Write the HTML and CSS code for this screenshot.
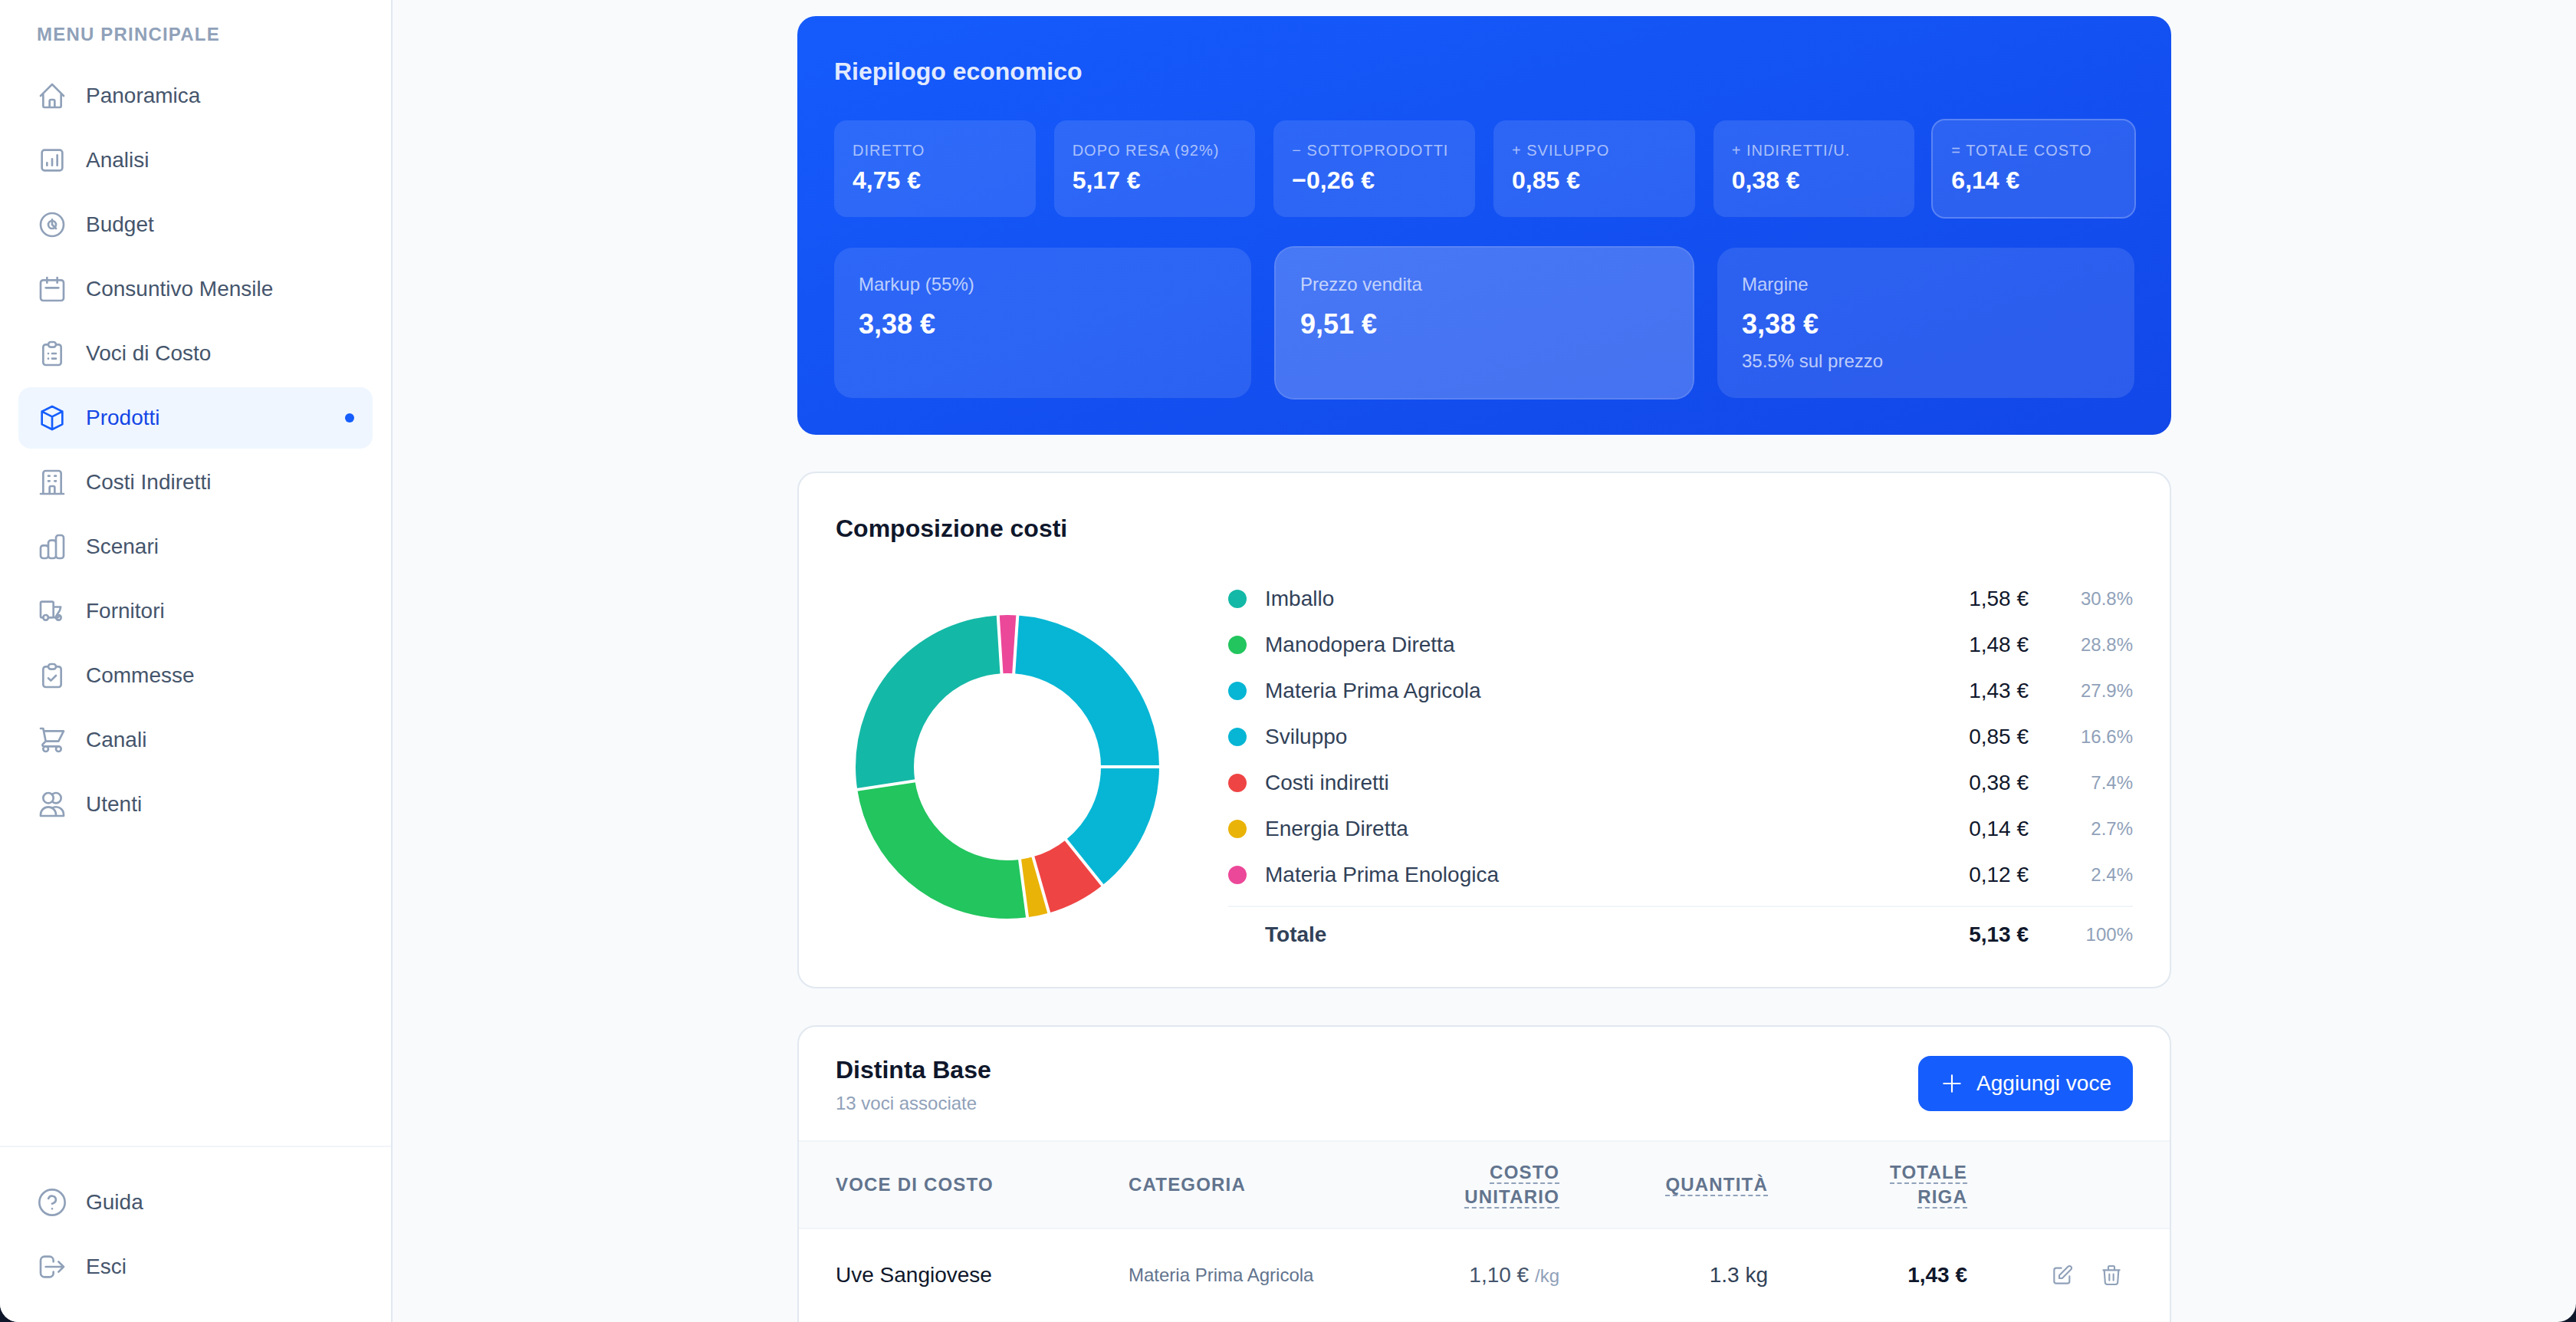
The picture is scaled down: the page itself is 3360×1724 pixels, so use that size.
FILE: index.html
```html
<!DOCTYPE html>
<html lang="it">
<head>
<meta charset="utf-8">
<title>Prodotti</title>
<link rel="stylesheet" href="styles.css">
</head>
<body>
<div class="app">
  <aside class="sidebar">
    <nav class="nav">
      <h2 class="nav-title">MENU PRINCIPALE</h2>
      <a class="nav-item"><svg class="icon" viewBox="0 0 24 24"><path d="M3 12l2-2m0 0l7-7 7 7M5 10v10a1 1 0 001 1h3m10-11l2 2m-2-2v10a1 1 0 01-1 1h-3m-6 0a1 1 0 001-1v-4a1 1 0 011-1h2a1 1 0 011 1v4a1 1 0 001 1m-6 0h6"/></svg><span>Panoramica</span></a>
      <a class="nav-item"><svg class="icon" viewBox="0 0 24 24"><path d="M16 8v8m-4-5v5m-4-2v2m-2 4h12a2 2 0 002-2V6a2 2 0 00-2-2H6a2 2 0 00-2 2v12a2 2 0 002 2z"/></svg><span>Analisi</span></a>
      <a class="nav-item"><svg class="icon" viewBox="0 0 24 24"><circle cx="12" cy="12" r="9"/><circle cx="12" cy="12" r="3"/><path d="M12 8v4l3 3"/></svg><span>Budget</span></a>
      <a class="nav-item"><svg class="icon" viewBox="0 0 24 24"><path d="M8 7V3m8 4V3m-9 8h10M5 21h14a2 2 0 002-2V7a2 2 0 00-2-2H5a2 2 0 00-2 2v12a2 2 0 002 2z"/></svg><span>Consuntivo Mensile</span></a>
      <a class="nav-item"><svg class="icon" viewBox="0 0 24 24"><path d="M9 5H7a2 2 0 00-2 2v12a2 2 0 002 2h10a2 2 0 002-2V7a2 2 0 00-2-2h-2M9 5a2 2 0 002 2h2a2 2 0 002-2M9 5a2 2 0 012-2h2a2 2 0 012 2m-3 7h3m-3 4h3m-6-4h.01M9 16h.01"/></svg><span>Voci di Costo</span></a>
      <a class="nav-item active"><svg class="icon" viewBox="0 0 24 24"><path d="M20 7l-8-4-8 4m16 0l-8 4m8-4v10l-8 4m0-10L4 7m8 4v10M4 7v10l8 4"/></svg><span>Prodotti</span><i class="nav-dot"></i></a>
      <a class="nav-item"><svg class="icon" viewBox="0 0 24 24"><path d="M19 21V5a2 2 0 00-2-2H7a2 2 0 00-2 2v16m14 0h2m-2 0h-5m-9 0H3m2 0h5M9 7h1m-1 4h1m4-4h1m-1 4h1m-5 10v-5a1 1 0 011-1h2a1 1 0 011 1v5m-4 0h4"/></svg><span>Costi Indiretti</span></a>
      <a class="nav-item"><svg class="icon" viewBox="0 0 24 24"><path d="M9 19v-6a2 2 0 00-2-2H5a2 2 0 00-2 2v6a2 2 0 002 2h2a2 2 0 002-2zm0 0V9a2 2 0 012-2h2a2 2 0 012 2v10m-6 0a2 2 0 002 2h2a2 2 0 002-2m0 0V5a2 2 0 012-2h2a2 2 0 012 2v14a2 2 0 01-2 2h-2a2 2 0 01-2-2z"/></svg><span>Scenari</span></a>
      <a class="nav-item"><svg class="icon" viewBox="0 0 24 24"><path d="M9 17a2 2 0 11-4 0 2 2 0 014 0zM19 17a2 2 0 11-4 0 2 2 0 014 0z"/><path d="M13 16V5.600a1 1 0 00-1-1H4a1 1 0 00-1 1V16a1 1 0 001 1h1m8-1a1 1 0 01-1 1H9m4-8.300h5.700L18 11.300l-3.200 5.200M13 16a1 1 0 001 1h2.500l1.300-1.300"/></svg><span>Fornitori</span></a>
      <a class="nav-item"><svg class="icon" viewBox="0 0 24 24"><path d="M9 5H7a2 2 0 00-2 2v12a2 2 0 002 2h10a2 2 0 002-2V7a2 2 0 00-2-2h-2M9 5a2 2 0 002 2h2a2 2 0 002-2M9 5a2 2 0 012-2h2a2 2 0 012 2m-6 9l2 2 4-4"/></svg><span>Commesse</span></a>
      <a class="nav-item"><svg class="icon" viewBox="0 0 24 24"><path d="M3 3h2l.4 2M7 13h10l4-8H5.400M7 13L5.400 5M7 13l-2.293 2.293c-.630.630-.184 1.707.707 1.707H17m0 0a2 2 0 100 4 2 2 0 000-4zm-8 2a2 2 0 11-4 0 2 2 0 014 0z"/></svg><span>Canali</span></a>
      <a class="nav-item"><svg class="icon" viewBox="0 0 24 24"><path d="M12 4.354a4 4 0 110 5.292M15 21H3v-1a6 6 0 0112 0v1zm0 0h6v-1a6 6 0 00-9-5.197M13 7a4 4 0 11-8 0 4 4 0 018 0z"/></svg><span>Utenti</span></a>
    </nav>
    <div class="nav nav-footer">
      <a class="nav-item"><svg class="icon" viewBox="0 0 24 24"><circle cx="12" cy="12" r="10"/><path d="M9.090 9a3 3 0 0 1 5.830 1c0 2-3 3-3 3M12 17h.01"/></svg><span>Guida</span></a>
      <a class="nav-item"><svg class="icon" viewBox="0 0 24 24"><path d="M17 16l4-4m0 0l-4-4m4 4H7m6 4v1a3 3 0 01-3 3H6a3 3 0 01-3-3V7a3 3 0 013-3h4a3 3 0 013 3v1"/></svg><span>Esci</span></a>
    </div>
  </aside>

  <main class="main">
    <div class="content">
      <section class="summary">
        <h3 class="title">Riepilogo economico</h3>
        <div class="steps">
          <div class="step"><p>DIRETTO</p><b>4,75 €</b></div>
          <div class="step"><p>DOPO RESA (92%)</p><b>5,17 €</b></div>
          <div class="step"><p>− SOTTOPRODOTTI</p><b>−0,26 €</b></div>
          <div class="step"><p>+ SVILUPPO</p><b>0,85 €</b></div>
          <div class="step"><p>+ INDIRETTI/U.</p><b>0,38 €</b></div>
          <div class="step ring"><p>= TOTALE COSTO</p><b>6,14 €</b></div>
        </div>
        <div class="results">
          <div class="result"><p>Markup (55%)</p><b>3,38 €</b></div>
          <div class="result ring strong"><p>Prezzo vendita</p><b>9,51 €</b></div>
          <div class="result"><p>Margine</p><b>3,38 €</b><small>35.5% sul prezzo</small></div>
        </div>
      </section>

      <section class="card composition">
        <h3 class="title">Composizione costi</h3>
        <div class="composition-body">
          <svg class="donut" viewBox="-224 -224 448 448">
            <g class="slices" transform="scale(1 -1)">
              <circle class="c-cyan" r="160" pathLength="116.6" stroke-dasharray="27.9 116.6"/>
              <circle class="c-pink" r="160" pathLength="116.6" stroke-dasharray="2.4 116.6" stroke-dashoffset="-27.9"/>
              <circle class="c-teal" r="160" pathLength="116.6" stroke-dasharray="30.8 116.6" stroke-dashoffset="-30.3"/>
              <circle class="c-green" r="160" pathLength="116.6" stroke-dasharray="28.8 116.6" stroke-dashoffset="-61.1"/>
              <circle class="c-yellow" r="160" pathLength="116.6" stroke-dasharray="2.7 116.6" stroke-dashoffset="-89.9"/>
              <circle class="c-red" r="160" pathLength="116.6" stroke-dasharray="7.4 116.6" stroke-dashoffset="-92.6"/>
              <circle class="c-cyan" r="160" pathLength="116.6" stroke-dasharray="16.6 116.6" stroke-dashoffset="-100"/>
            </g>
            <g class="gaps">
              <path d="M118 0H202"/>
              <path d="M118 0H202" transform="rotate(-86.14)"/>
              <path d="M118 0H202" transform="rotate(-93.55)"/>
              <path d="M118 0H202" transform="rotate(-188.65)"/>
              <path d="M118 0H202" transform="rotate(-277.56)"/>
              <path d="M118 0H202" transform="rotate(-285.90)"/>
              <path d="M118 0H202" transform="rotate(-308.75)"/>
            </g>
          </svg>
          <ul class="legend">
            <li><i class="dot c-teal"></i><span>Imballo</span><em>1,58 €</em><small>30.8%</small></li>
            <li><i class="dot c-green"></i><span>Manodopera Diretta</span><em>1,48 €</em><small>28.8%</small></li>
            <li><i class="dot c-cyan"></i><span>Materia Prima Agricola</span><em>1,43 €</em><small>27.9%</small></li>
            <li><i class="dot c-cyan"></i><span>Sviluppo</span><em>0,85 €</em><small>16.6%</small></li>
            <li><i class="dot c-red"></i><span>Costi indiretti</span><em>0,38 €</em><small>7.4%</small></li>
            <li><i class="dot c-yellow"></i><span>Energia Diretta</span><em>0,14 €</em><small>2.7%</small></li>
            <li><i class="dot c-pink"></i><span>Materia Prima Enologica</span><em>0,12 €</em><small>2.4%</small></li>
            <li class="legend-total"><i class="dot"></i><span>Totale</span><em>5,13 €</em><small>100%</small></li>
          </ul>
        </div>
      </section>

      <section class="card bom">
        <header class="bom-header">
          <div>
            <h3 class="title">Distinta Base</h3>
            <p class="subtitle">13 voci associate</p>
          </div>
          <button class="add"><svg class="icon" viewBox="0 0 24 24"><path d="M12 4v16m8-8H4"/></svg><span>Aggiungi voce</span></button>
        </header>
        <table class="table">
          <colgroup><col class="w-name"><col class="w-cat"><col class="w-cost"><col class="w-qty"><col class="w-total"><col class="w-actions"></colgroup>
          <thead>
            <tr>
              <th>VOCE DI COSTO</th>
              <th>CATEGORIA</th>
              <th class="num"><span class="hint">COSTO UNITARIO</span></th>
              <th class="num"><span class="hint">QUANTITÀ</span></th>
              <th class="num"><span class="hint">TOTALE RIGA</span></th>
              <th></th>
            </tr>
          </thead>
          <tbody>
            <tr>
              <td class="name">Uve Sangiovese</td>
              <td class="cat">Materia Prima Agricola</td>
              <td class="num cost">1,10 € <small>/kg</small></td>
              <td class="num qty">1.3 kg</td>
              <td class="num total">1,43 €</td>
              <td>
                <div class="actions">
                  <button><svg class="icon" viewBox="0 0 24 24"><path d="M11 5H6a2 2 0 00-2 2v11a2 2 0 002 2h11a2 2 0 002-2v-5m-1.414-9.414a2 2 0 112.828 2.828L11.828 15H9v-2.828l8.586-8.586z"/></svg></button>
                  <button><svg class="icon" viewBox="0 0 24 24"><path d="M19 7l-.867 12.142A2 2 0 0116.138 21H7.862a2 2 0 01-1.995-1.858L5 7m5 4v6m4-6v6m1-10V4a1 1 0 00-1-1h-4a1 1 0 00-1 1v3M4 7h16"/></svg></button>
                </div>
              </td>
            </tr>
          </tbody>
        </table>
      </section>
    </div>
  </main>
</div>
</body>
</html>
```
FILE: styles.css
```css
* { box-sizing: border-box; margin: 0; padding: 0; }

body {
  height: 1724px;
  overflow: hidden;
  background: #0f172b;
  font-family: "Liberation Sans", Arial, sans-serif;
  font-size: 28px;
  line-height: 40px;
  color: #0f172b;
}

button { border: 0; background: none; font: inherit; color: inherit; }
ul { list-style: none; }
i, em { font-style: normal; }

.app {
  display: flex;
  height: 1724px;
  overflow: hidden;
  border-radius: 0 0 24px 24px;
  background: #f8fafc;
}

.icon {
  flex: none;
  width: 40px;
  height: 40px;
  fill: none;
  stroke: currentColor;
  stroke-width: 1.6;
  stroke-linecap: round;
  stroke-linejoin: round;
}

/* Sidebar */
.sidebar {
  display: flex;
  flex-direction: column;
  justify-content: space-between;
  flex: none;
  width: 512px;
  border-right: 2px solid #e2e8f0;
  background: #fff;
}
.nav { display: flex; flex-direction: column; gap: 4px; padding: 29px 24px 0; }
.nav-title {
  padding: 0 24px;
  margin-bottom: 20px;
  font-size: 24px;
  line-height: 32px;
  letter-spacing: 0.05em;
  color: #90a1b9;
}
.nav-item {
  display: flex;
  align-items: center;
  gap: 24px;
  height: 80px;
  padding: 0 24px;
  border-radius: 16px;
  color: #45556c;
}
.nav-item .icon { color: #90a1b9; }
.nav-item.active { background: #eff6ff; color: #1447e6; }
.nav-item.active .icon { color: #155dfc; }
.nav-dot { width: 12px; height: 12px; margin-left: auto; border-radius: 50%; background: #155dfc; }
.nav-footer { padding: 32px 24px; border-top: 2px solid #f1f5f9; }

/* Content */
.main { flex: 1; overflow: hidden; padding-top: 21px; }
.content { display: flex; flex-direction: column; gap: 48px; width: 1792px; margin: 0 auto; }
.title { font-size: 32px; line-height: 48px; font-weight: 700; }

/* Economic summary */
.summary {
  padding: 48px;
  border-radius: 24px;
  background: linear-gradient(to bottom right, #155bfc, #1247e8);
  color: #fff;
}
.summary .title { color: rgba(255, 255, 255, 0.9); }
.steps { display: grid; grid-template-columns: repeat(6, 1fr); gap: 24px; margin: 40px 0; }
.step { padding: 24px; border-radius: 16px; background: rgba(255, 255, 255, 0.11); white-space: nowrap; }
.step p { font-size: 20px; line-height: 30px; letter-spacing: 0.05em; color: rgba(255, 255, 255, 0.6); }
.step b { display: block; font-size: 32px; line-height: 48px; }
.results { display: grid; grid-template-columns: repeat(3, 1fr); gap: 32px; }
.result { padding: 32px; border-radius: 24px; background: rgba(255, 255, 255, 0.11); }
.result p, .result small { display: block; font-size: 24px; line-height: 32px; color: rgba(255, 255, 255, 0.7); }
.result b { display: block; margin-top: 8px; font-size: 36px; line-height: 56px; }
.result small { margin-top: 4px; }
.result.strong { background: rgba(255, 255, 255, 0.22); }
.ring { box-shadow: 0 0 0 2px rgba(255, 255, 255, 0.3); }

/* Cards */
.card { border: 2px solid #e2e8f0; border-radius: 24px; background: #fff; overflow: hidden; }

/* Cost composition */
.composition { padding: 48px; }
.composition-body { display: flex; align-items: center; gap: 64px; margin-top: 48px; }
.donut { flex: none; width: 448px; height: 448px; }
.slices circle { fill: none; stroke: currentColor; stroke-width: 76; }
.gaps path { stroke: #fff; stroke-width: 4; }
.legend { display: flex; flex-direction: column; gap: 20px; flex: 1; }
.legend li { display: flex; align-items: center; gap: 24px; }
.legend span { flex: 1; color: #314158; }
.legend small { width: 112px; font-size: 24px; text-align: right; color: #90a1b9; }
.dot { width: 24px; height: 24px; border-radius: 50%; }
.dot[class*="c-"] { background: currentColor; }
.legend .legend-total { padding-top: 16px; border-top: 2px solid #f1f5f9; }
.legend-total span, .legend-total em { font-weight: 700; }

.c-teal { color: #14b8a6; }
.c-green { color: #22c55e; }
.c-cyan { color: #06b6d4; }
.c-red { color: #ef4444; }
.c-yellow { color: #eab308; }
.c-pink { color: #ec4899; }

/* Bill of materials */
.bom { min-height: 480px; }
.bom-header {
  display: flex;
  align-items: center;
  justify-content: space-between;
  padding: 32px 48px;
  border-bottom: 2px solid #f1f5f9;
}
.subtitle { margin-top: 4px; font-size: 24px; line-height: 32px; color: #90a1b9; }
.add {
  display: flex;
  align-items: center;
  gap: 16px;
  height: 72px;
  padding: 0 28px;
  border-radius: 16px;
  background: #155dfc;
  color: #fff;
}
.add .icon { width: 32px; height: 32px; }

.table { width: 100%; table-layout: fixed; border-collapse: separate; border-spacing: 0; }
.w-name { width: 382px; }
.w-cat { width: 378px; }
.w-cost { width: 280px; }
.w-qty { width: 272px; }
.w-total { width: 260px; }
.w-actions { width: 216px; }
.table th {
  padding: 24px 48px;
  border-bottom: 2px solid #f1f5f9;
  background: #f8fafc;
  font-size: 24px;
  line-height: 32px;
  letter-spacing: 0.05em;
  text-align: left;
  color: #62748e;
}
.table td { padding: 32px 48px; border-bottom: 2px solid #f8fafc; white-space: nowrap; }
.table .num { text-align: right; }
.hint { border-bottom: 2px dashed #90a1b9; }
.table .cat { font-size: 24px; color: #62748e; }
.cost { color: #45556c; }
.cost small { font-size: 24px; color: #90a1b9; }
.qty { color: #314158; }
.total { font-weight: 700; }
.actions { display: flex; justify-content: flex-end; gap: 8px; color: #90a1b9; }
.actions button { display: flex; padding: 12px; }
.actions .icon { width: 32px; height: 32px; }
```
